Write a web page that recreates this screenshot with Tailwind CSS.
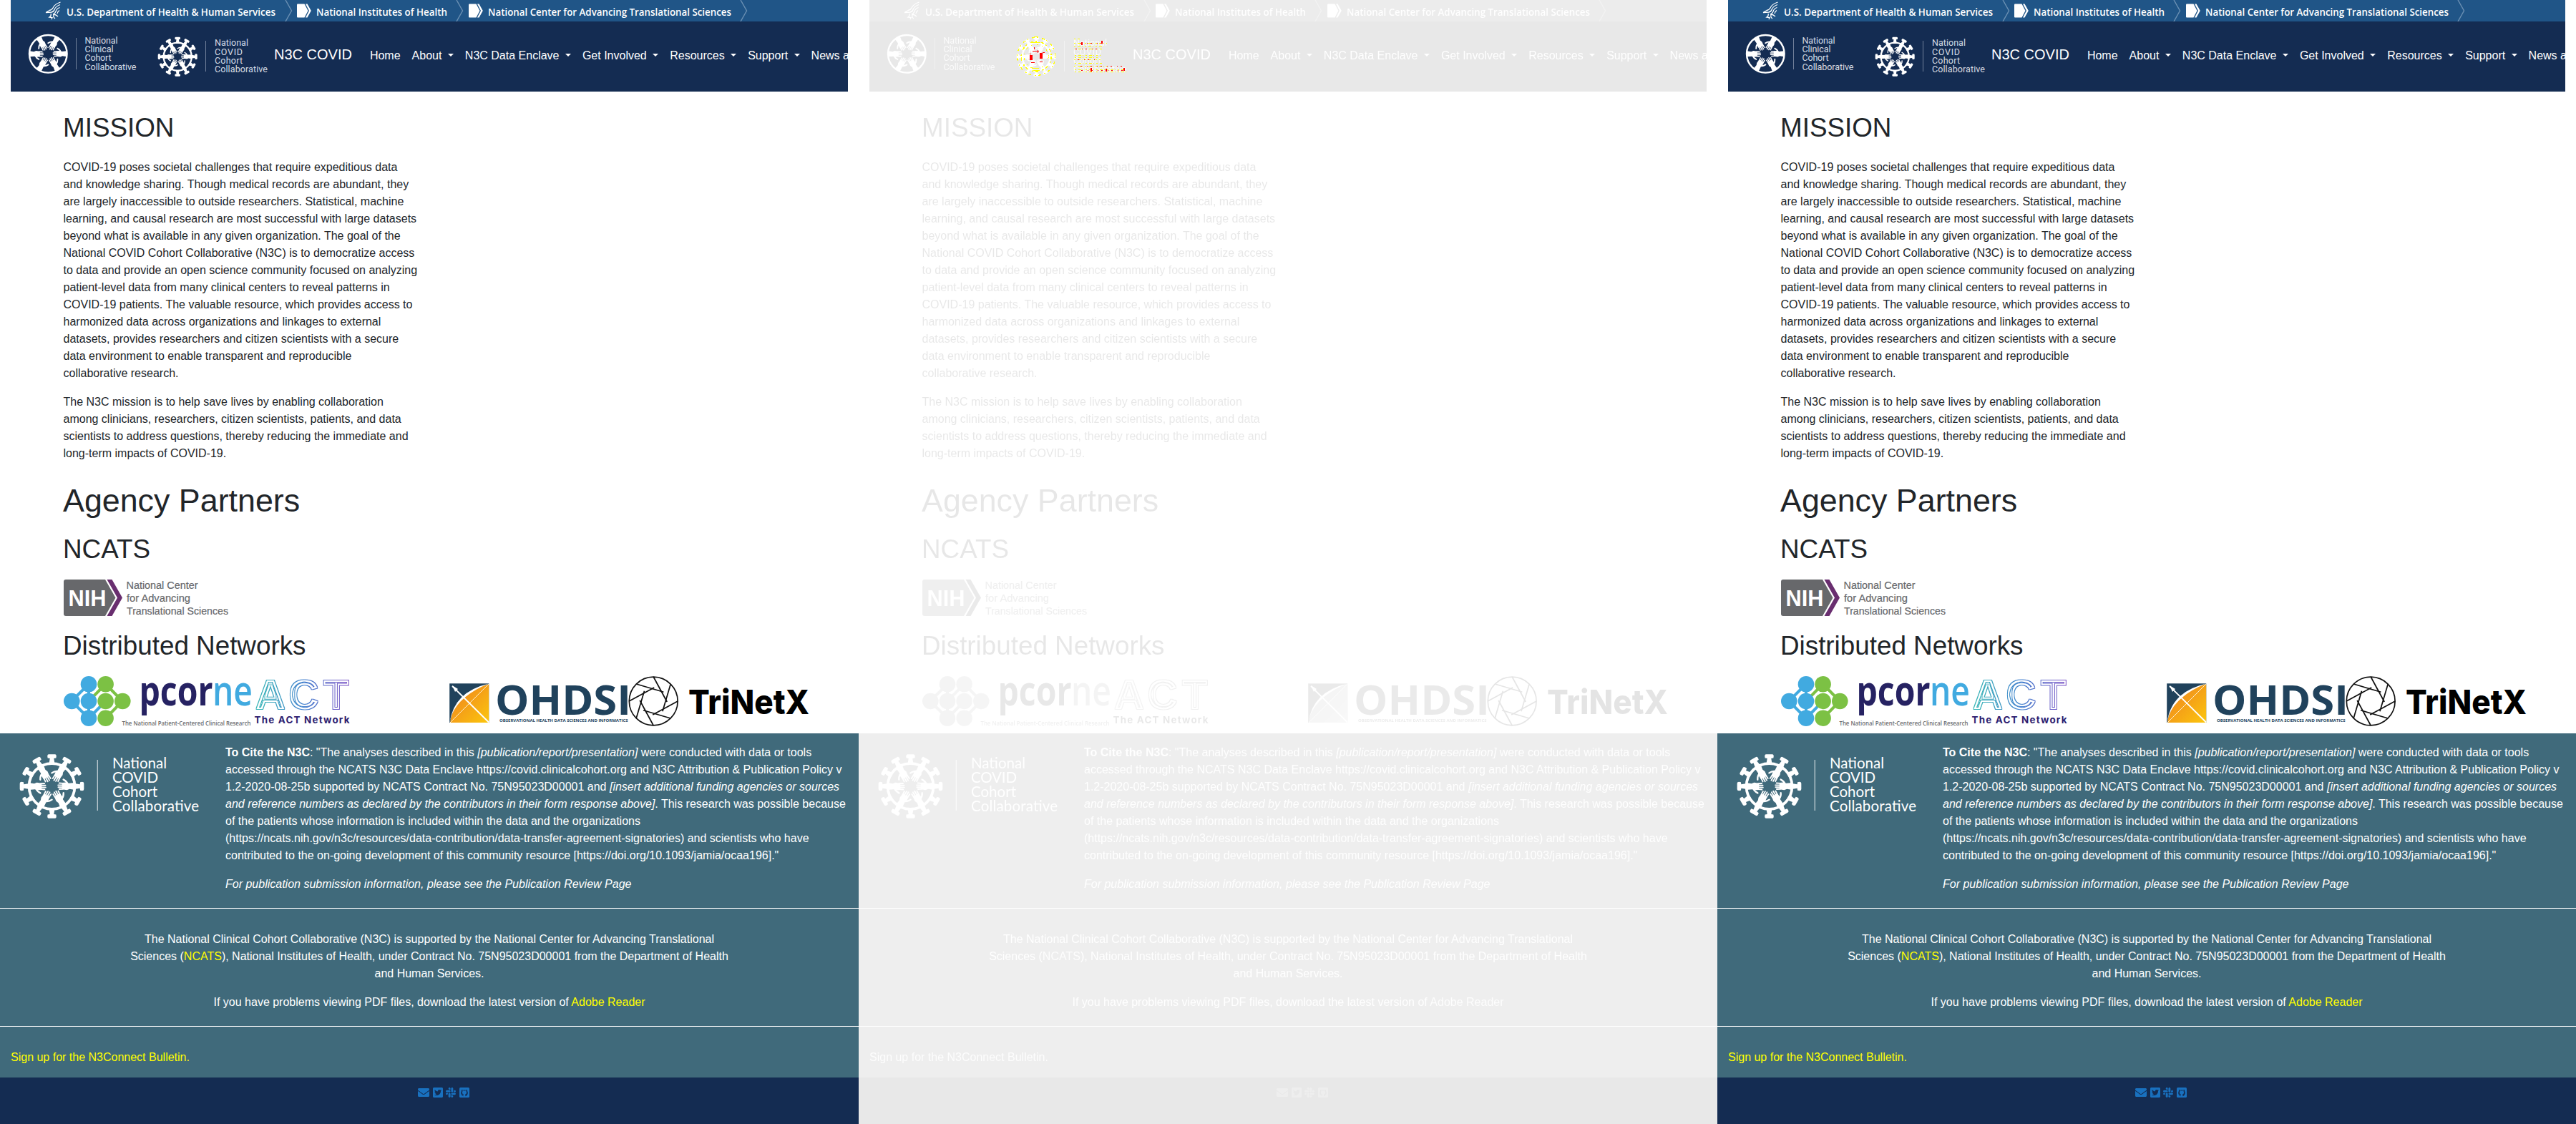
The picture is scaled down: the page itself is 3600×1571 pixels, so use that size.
<!DOCTYPE html>
<html lang="en">
<head>
<meta charset="utf-8">
<title>N3C COVID</title>
<script src="https://cdn.jsdelivr.net/npm/@tailwindcss/browser@4"></script>
</head>
<body class="bg-white overflow-hidden">
<svg width="0" height="0" class="absolute">
  <defs>
    <!-- one arm reaching from the ring to the centre -->
    <g id="hand">
      <path d="M26 -4 L19 -3.4 L16 -4.4 L11.500 -4 L11.500 3.500 L17 4.200 L20 3 L26 4Z" fill="#fff"/>
      <path d="M12.500 -3.300L8.200 -3.600M12.500 -1.200L7 -1.300M12.500 1L7.200 1M12.500 3L8.400 3.200" stroke="#fff" stroke-width="1.500" stroke-linecap="round"/>
      <path d="M18 -2.500 Q16.500 -6 13 -7.600" stroke="#fff" stroke-width="1.900" stroke-linecap="round" fill="none"/>
    </g>
    <g id="hands">
      <use href="#hand"/><use href="#hand" transform="rotate(60)"/><use href="#hand" transform="rotate(120)"/>
      <use href="#hand" transform="rotate(180)"/><use href="#hand" transform="rotate(240)"/><use href="#hand" transform="rotate(300)"/>
    </g>
    <g id="knob"><path d="M18.500 -2.600L24 -1.700L24.300 -3.600Q27.500 -4.400 27.500 -2.500L27.500 2.500Q27.500 4.400 24.300 3.600L24 1.700L18.500 2.600Z" fill="#fff"/></g>
    <g id="knobs3"><use href="#knob"/><use href="#knob" transform="rotate(30)"/><use href="#knob" transform="rotate(60)"/></g>
    <g id="virus">
      <use href="#knobs3"/><use href="#knobs3" transform="rotate(90)"/><use href="#knobs3" transform="rotate(180)"/><use href="#knobs3" transform="rotate(270)"/>
      <circle r="19.600" fill="none" stroke="#fff" stroke-width="2.300"/>
      <use href="#hands" transform="scale(.76)"/>
    </g>
    <linearGradient id="act" gradientUnits="userSpaceOnUse" x1="356" x2="489" y1="0" y2="0"><stop offset="0" stop-color="#35b8b4"/><stop offset=".5" stop-color="#4584cf"/><stop offset="1" stop-color="#7b4fc4"/></linearGradient>
    <linearGradient id="ora" x1="0" x2="1" y1="0" y2="1"><stop offset="0" stop-color="#ed7c22"/><stop offset="1" stop-color="#fcc60d"/></linearGradient>
    <!-- keeps two thin contours of a solid shape -->
    <filter id="contours" x="-5%" y="-10%" width="110%" height="120%" color-interpolation-filters="sRGB">
      <feMorphology in="SourceGraphic" operator="dilate" radius="1" result="d1"/>
      <feComposite in="d1" in2="SourceGraphic" operator="out" result="outer"/>
      <feMorphology in="SourceGraphic" operator="erode" radius="2" result="e1"/>
      <feMorphology in="SourceGraphic" operator="erode" radius="3" result="e2"/>
      <feComposite in="e1" in2="e2" operator="out" result="inner"/>
      <feMerge><feMergeNode in="outer"/><feMergeNode in="inner"/></feMerge>
    </filter>
  </defs>
</svg>

<div class="flex w-[3600px] h-[1571px] font-['Liberation_Sans',Arial,sans-serif] text-base text-[#212529]">
  <section id="before" class="w-[1200px] h-[1571px] shrink-0 overflow-hidden">
    <header class="mx-[15px] overflow-hidden">
      <div class="h-[30px] bg-[#205587] flex items-center text-white">
        <svg class="ml-[48px] w-[23px] h-[26px] shrink-0" viewBox="0 0 23 26" fill="none" stroke="#fff" stroke-width="1.300">
          <path d="M21.500 1Q13 4 11 9Q9.500 12 6 12.500L1 15.500M21 4.500Q14.500 7 13 11.500Q12 14.500 9 15L1 15.500M20.500 8.500Q16 10 15 14Q14 17 11 18M20 12.500Q17.500 14 17 17M11 18Q15 18 18 21M8 17Q9 20 6 22L10 22.500L9 25M12 19Q11 22 14 24"/>
        </svg>
        <svg class="ml-[7px] w-[293px] h-[30px] shrink-0 font-['Open_Sans',sans-serif] font-semibold text-[13.5px]" viewBox="0 0 293 30"><text x="0" y="22" textLength="292" lengthAdjust="spacingAndGlyphs" fill="#fff">U.S. Department of Health &amp; Human Services</text></svg>
        <svg class="ml-[12px] w-[11px] h-[30px] shrink-0" viewBox="0 0 11 30"><path d="M1 0L9.500 15L1 30" fill="none" stroke="#6b90b3" stroke-width="1.400"/></svg>
        <svg class="ml-[6px] w-[20px] h-[20px] shrink-0" viewBox="0 0 20 20"><path d="M0 1.500Q0 .5 1 .5H10.500L15.500 10L10.500 19.500H1Q0 19.500 0 18.500Z" fill="#fff"/><path d="M12 .5H14.500L19.800 10L14.500 19.500H12L17 10Z" fill="#fff"/></svg>
        <svg class="ml-[7px] w-[184px] h-[30px] shrink-0 font-['Open_Sans',sans-serif] font-semibold text-[13.5px]" viewBox="0 0 184 30"><text x="0" y="22" textLength="183" lengthAdjust="spacingAndGlyphs" fill="#fff">National Institutes of Health</text></svg>
        <svg class="ml-[11px] w-[11px] h-[30px] shrink-0" viewBox="0 0 11 30"><path d="M1 0L9.500 15L1 30" fill="none" stroke="#6b90b3" stroke-width="1.400"/></svg>
        <svg class="ml-[7px] w-[20px] h-[20px] shrink-0" viewBox="0 0 20 20"><path d="M0 1.500Q0 .5 1 .5H10.500L15.500 10L10.500 19.500H1Q0 19.500 0 18.500Z" fill="#fff"/><path d="M12 .5H14.500L19.800 10L14.500 19.500H12L17 10Z" fill="#fff"/></svg>
        <svg class="ml-[7px] w-[341px] h-[30px] shrink-0 font-['Open_Sans',sans-serif] font-semibold text-[13.5px]" viewBox="0 0 341 30"><text x="0" y="22" textLength="340" lengthAdjust="spacingAndGlyphs" fill="#fff">National Center for Advancing Translational Sciences</text></svg>
        <svg class="ml-[11px] w-[11px] h-[30px] shrink-0" viewBox="0 0 11 30"><path d="M1 0L9.500 15L1 30" fill="none" stroke="#6b90b3" stroke-width="1.400"/></svg>
      </div>
      <nav class="h-[98px] bg-[#142c52] flex text-white whitespace-nowrap">
        <svg class="w-[369px] h-[98px] shrink-0 font-[Roboto,sans-serif]" viewBox="15 30 369 98" fill="#fff">
          <g transform="translate(67.300 75.300)"><circle r="26.300" fill="none" stroke="#fff" stroke-width="2.400"/><use href="#hands"/></g>
          <path d="M106.500 53V97" stroke="#71809a"/>
          <g font-size="12.500" fill="#d7dce4">
            <text x="118.500" y="60.500" textLength="46">National</text><text x="118.500" y="73" textLength="40">Clinical</text><text x="118.500" y="85.300" textLength="37">Cohort</text><text x="118.500" y="97.600" textLength="72">Collaborative</text>
          </g>
          <use href="#virus" transform="translate(248.200 79.200)"/>
          <path d="M287.500 57V100" stroke="#71809a"/>
          <g font-size="12.500" fill="#d7dce4">
            <text x="300" y="64.300" textLength="47">National</text><text x="300" y="76.500" textLength="39">COVID</text><text x="300" y="88.700" textLength="39">Cohort</text><text x="300" y="101" textLength="74">Collaborative</text>
          </g>
        </svg>
        <span class="text-xl leading-[30px] mt-[31px] -ml-[1px]">N3C COVID</span>
        <ul class="flex ml-[25px] mt-[36px] gap-4 leading-6">
          <li>Home</li>
          <li>About <i class="inline-block ml-1 align-[0.255em] border-x-[4.8px] border-x-transparent border-t-[4.8px] border-t-white"></i></li>
          <li>N3C Data Enclave <i class="inline-block ml-1 align-[0.255em] border-x-[4.8px] border-x-transparent border-t-[4.8px] border-t-white"></i></li>
          <li>Get Involved <i class="inline-block ml-1 align-[0.255em] border-x-[4.8px] border-x-transparent border-t-[4.8px] border-t-white"></i></li>
          <li>Resources <i class="inline-block ml-1 align-[0.255em] border-x-[4.8px] border-x-transparent border-t-[4.8px] border-t-white"></i></li>
          <li>Support <i class="inline-block ml-1 align-[0.255em] border-x-[4.8px] border-x-transparent border-t-[4.8px] border-t-white"></i></li>
          <li>News a</li>
        </ul>
      </nav>
    </header>
    <main class="h-[897px] pl-[88px] pt-[29px] whitespace-nowrap">
      <h2 class="text-[36.8px] leading-[44px]">MISSION</h2>
      <p class="mt-[21px] pl-[0.5px] leading-6">COVID-19 poses societal challenges that require expeditious data<br>and knowledge sharing. Though medical records are abundant, they<br>are largely inaccessible to outside researchers. Statistical, machine<br>learning, and causal research are most successful with large datasets<br>beyond what is available in any given organization. The goal of the<br>National COVID Cohort Collaborative (N3C) is to democratize access<br>to data and provide an open science community focused on analyzing<br>patient-level data from many clinical centers to reveal patterns in<br>COVID-19 patients. The valuable resource, which provides access to<br>harmonized data across organizations and linkages to external<br>datasets, provides researchers and citizen scientists with a secure<br>data environment to enable transparent and reproducible<br>collaborative research.</p>
      <p class="mt-4 pl-[0.5px] leading-6">The N3C mission is to help save lives by enabling collaboration<br>among clinicians, researchers, citizen scientists, patients, and data<br>scientists to address questions, thereby reducing the immediate and<br>long-term impacts of COVID-19.</p>
      <h1 class="mt-[26px] text-[44.8px] leading-[54px]">Agency Partners</h1>
      <h2 class="mt-5 text-[36.8px] leading-[44px]">NCATS</h2>
      <svg class="mt-5 block w-[240px] h-[51px]" viewBox="88 810 240 51">
        <path d="M92 810H147L161.500 835.500L147 861H92Q89 861 89 858V813Q89 810 92 810Z" fill="#67686b"/>
        <path d="M149.500 810H156.500L171 835.500L156.500 861H149.500L164 835.500Z" fill="#692e6f"/>
        <text x="95.500" y="847" font-family="Liberation Sans" font-weight="700" font-size="30.500" textLength="53" lengthAdjust="spacingAndGlyphs" fill="#fff">NIH</text>
        <g font-family="Liberation Sans" font-size="14" fill="#68696c" stroke="#68696c" stroke-width=".2"><text x="176.500" y="823" textLength="100" lengthAdjust="spacingAndGlyphs">National Center</text><text x="177" y="841" textLength="89" lengthAdjust="spacingAndGlyphs">for Advancing</text><text x="177" y="858.500" textLength="142" lengthAdjust="spacingAndGlyphs">Translational Sciences</text></g>
      </svg>
      <h2 class="mt-5 text-[36.8px] leading-[44px]">Distributed Networks</h2>
      <div class="mt-5 flex">
        <svg class="block w-[265px] h-[71px]" viewBox="88 945 265 71">
          <path d="M124 956L100 980L124 1004M124 956V1004L147.600 980" stroke="#41aae0" stroke-width="4" fill="none"/>
          <path d="M147.600 956L171 980L147.600 1004M124 980L147.600 956" stroke="#7cc144" stroke-width="4" fill="none"/>
          <g fill="#41aae0"><circle cx="124" cy="956.300" r="11.300"/><circle cx="100.300" cy="980" r="11.300"/><circle cx="124" cy="980" r="11.300"/><circle cx="124" cy="1003.700" r="11.300"/></g>
          <g fill="#7cc144"><circle cx="147.600" cy="956.300" r="11.300"/><circle cx="147.600" cy="980" r="11.300"/><circle cx="171.300" cy="980" r="11.300"/><circle cx="147.600" cy="1003.700" r="11.300"/></g>
          <g font-family="Open Sans" font-size="58"><text x="194.500" y="985.500" font-weight="700" textLength="103" lengthAdjust="spacingAndGlyphs" fill="#262262">pcor</text><text x="297" y="985.500" font-weight="600" textLength="56" lengthAdjust="spacingAndGlyphs" fill="#41aae0">ne</text></g>
          <text x="170.500" y="1013.500" font-family="Open Sans" font-weight="600" font-size="8.500" textLength="180" lengthAdjust="spacingAndGlyphs" fill="#6a6b6e">The National Patient-Centered Clinical Research</text>
        </svg>
        <svg class="block w-[187px] h-[71px]" viewBox="353 945 187 71">
          <text x="357 403.500 452" y="990.500" font-family="Liberation Sans" font-weight="700" font-size="58" fill="url(#act)" filter="url(#contours)">ACT</text>
          <text x="355.500" y="1011.300" font-family="Inter" font-weight="700" font-size="13.400" textLength="133" fill="#2d1e70">The ACT Network</text>
        </svg>
        <svg class="block ml-[88px] w-[250px] h-[71px]" viewBox="628 945 250 71">
          <rect x="628.200" y="955.300" width="55" height="54.700" fill="#20425c"/>
          <path d="M629 1010Q635 968 683.200 956V1010Z" fill="url(#ora)"/>
          <path d="M628.500 1010Q634 967 683 955.500Q642 972 631 1000Z" fill="#fff"/>
          <path d="M632 959L683 1009.500" stroke="#fff" stroke-width="1.800"/><path d="M629 1010L683 956" stroke="#fff" stroke-width=".8"/><path d="M632 958L640 963L636 967Z" fill="#fff"/>
          <text x="692" y="998.500" font-family="Open Sans" font-weight="700" font-size="58" textLength="190" lengthAdjust="spacingAndGlyphs" fill="#20425c">OHDSI</text>
          <text x="698" y="1008.700" font-family="Open Sans" font-weight="700" fill="#20425c" font-size="5.800" textLength="179.500" lengthAdjust="spacingAndGlyphs">OBSERVATIONAL HEALTH DATA SCIENCES AND INFORMATICS</text>
        </svg>
        <svg class="block w-[260px] h-[71px]" viewBox="878 945 260 71">
          <g transform="translate(913.200 980)" fill="none" stroke="#111" stroke-width="1.700"><circle r="33.900"/>
            <path d="M0 -34L19 1"/><path d="M0 -34L19 1" transform="rotate(45)"/><path d="M0 -34L19 1" transform="rotate(90)"/><path d="M0 -34L19 1" transform="rotate(135)"/><path d="M0 -34L19 1" transform="rotate(180)"/><path d="M0 -34L19 1" transform="rotate(225)"/><path d="M0 -34L19 1" transform="rotate(270)"/><path d="M0 -34L19 1" transform="rotate(315)"/></g>
          <text x="962" y="997.500" font-family="Inter" font-weight="800" font-size="47" textLength="169" lengthAdjust="spacingAndGlyphs" fill="#000">TriNetX</text>
        </svg>
      </div>
    </main>
    <footer class="text-white whitespace-nowrap leading-6">
      <div class="bg-[#406a7b] h-[481px]">
        <div class="h-[244px] pt-[15px] flex">
          <svg class="-mt-[15px] w-[315px] h-[140px] shrink-0" viewBox="0 1025 315 140">
            <use href="#virus" transform="translate(72.500 1099) scale(1.630)"/>
            <path d="M136.300 1062V1133" stroke="#c2cfd5" stroke-width="1.300"/>
            <g font-family="Lato" font-size="20.500" fill="#fff"><text x="157" y="1073.700" textLength="76">National</text><text x="157" y="1093.700" textLength="64">COVID</text><text x="157" y="1113.800" textLength="63">Cohort</text><text x="157" y="1133.800" textLength="121">Collaborative</text></g>
          </svg>
          <div>
            <p><b>To Cite the N3C</b>: "The analyses described in this <em>[publication/report/presentation]</em> were conducted with data or tools<br>accessed through the NCATS N3C Data Enclave https://covid.clinicalcohort.org and N3C Attribution &amp; Publication Policy v<br>1.2-2020-08-25b supported by NCATS Contract No. 75N95023D00001 and <em>[insert additional funding agencies or sources<br>and reference numbers as declared by the contributors in their form response above]</em>. This research was possible because<br>of the patients whose information is included within the data and the organizations<br>(https://ncats.nih.gov/n3c/resources/data-contribution/data-transfer-agreement-signatories) and scientists who have<br>contributed to the on-going development of this community resource [https://doi.org/10.1093/jamia/ocaa196]."</p>
            <p class="mt-4 italic">For publication submission information, please see the Publication Review Page</p>
          </div>
        </div>
        <div class="border-t border-white h-[165px] pt-[31px] text-center">
          <p>The National Clinical Cohort Collaborative (N3C) is supported by the National Center for Advancing Translational<br>Sciences (<a class="text-[#ffff00]">NCATS</a>), National Institutes of Health, under Contract No. 75N95023D00001 from the Department of Health<br>and Human Services.</p>
          <p class="mt-4">If you have problems viewing PDF files, download the latest version of <a class="text-[#ffff00]">Adobe Reader</a></p>
        </div>
        <div class="border-t border-white pt-[31px] pl-[15px]"><a class="text-[#ffff00]">Sign up for the N3Connect Bulletin.</a></div>
      </div>
      <div class="h-[65px] bg-[#142c52] pt-[13px] pl-[584px] flex gap-[4.500px]">
        <svg class="size-4" viewBox="0 0 512 512" fill="#1971bf"><path d="M502.3 190.8c3.9-3.1 9.7-.2 9.7 4.7V400c0 26.500-21.500 48-48 48H48c-26.500 0-48-21.500-48-48V195.600c0-5 5.700-7.800 9.700-4.700 22.400 17.400 52.100 39.500 154.100 113.600 21.100 15.400 56.700 47.800 92.200 47.600 35.700.3 72-32.800 92.300-47.600 102-74.100 131.600-96.300 154-113.700zM256 320c23.200.4 56.600-29.200 73.400-41.400 132.700-96.300 142.800-104.700 173.400-128.700 5.800-4.500 9.200-11.500 9.200-18.900v-19c0-26.500-21.500-48-48-48H48c-26.500 0-48 21.500-48 48v19c0 7.400 3.400 14.300 9.200 18.900 30.600 23.900 40.700 32.400 173.400 128.700 16.800 12.200 50.200 41.800 73.400 41.400z"/></svg>
        <svg class="w-3.5 h-4" viewBox="0 0 448 512" fill="#1971bf"><path d="M400 32H48C21.500 32 0 53.500 0 80v352c0 26.500 21.500 48 48 48h352c26.500 0 48-21.500 48-48V80c0-26.500-21.500-48-48-48zm-48.900 158.800c.2 2.800.2 5.700.2 8.500 0 86.700-66 186.600-186.600 186.600-37.200 0-71.700-10.800-100.700-29.400 5.300.6 10.400.8 15.800.8 30.700 0 58.900-10.400 81.400-28-28.800-.6-53-19.500-61.300-45.500 10.100 1.500 19.200 1.500 29.600-1.200-30-6.100-52.500-32.500-52.500-64.400v-.8c8.700 4.900 18.900 7.900 29.600 8.300a65.447 65.447 0 0 1-29.200-54.600c0-12.200 3.200-23.400 8.900-33.100 32.300 39.800 80.800 65.800 135.200 68.600-9.300-44.500 24-80.600 64-80.600 18.900 0 35.900 7.900 47.900 20.700 14.800-2.800 29-8.300 41.600-15.800-4.900 15.200-15.200 28-28.800 36.100 13.200-1.400 26-5.100 37.800-10.200-8.900 13.100-20.100 24.700-32.900 34z"/></svg>
        <svg class="w-3.5 h-4" viewBox="0 0 448 512" fill="#1971bf"><path d="M94.120 315.100c0 25.900-21.160 47.060-47.060 47.060S0 341 0 315.100c0-25.900 21.160-47.060 47.060-47.060h47.060v47.060zm23.720 0c0-25.900 21.160-47.060 47.060-47.060s47.060 21.160 47.060 47.060v117.840c0 25.900-21.160 47.060-47.060 47.060s-47.060-21.160-47.060-47.060V315.100zm47.060-188.980c-25.900 0-47.060-21.160-47.060-47.060S139 32 164.900 32s47.060 21.160 47.060 47.060v47.060H164.900zm0 23.720c25.900 0 47.060 21.160 47.060 47.060s-21.160 47.060-47.060 47.060H47.060C21.160 243.960 0 222.800 0 196.900s21.160-47.060 47.060-47.060H164.900zm188.980 47.060c0-25.900 21.160-47.060 47.060-47.060 25.900 0 47.060 21.160 47.060 47.060s-21.160 47.060-47.060 47.060h-47.060V196.900zm-23.720 0c0 25.900-21.160 47.060-47.060 47.060-25.900 0-47.060-21.160-47.060-47.060V79.060c0-25.900 21.160-47.060 47.060-47.060 25.900 0 47.060 21.160 47.060 47.060V196.900zM283.100 385.880c25.900 0 47.060 21.160 47.060 47.060 0 25.900-21.160 47.060-47.060 47.060-25.900 0-47.060-21.160-47.060-47.060v-47.060h47.060zm0-23.720c-25.900 0-47.060-21.160-47.060-47.060 0-25.900 21.160-47.060 47.060-47.060h117.840c25.900 0 47.060 21.160 47.060 47.060 0 25.900-21.160 47.060-47.060 47.060H283.100z"/></svg>
        <svg class="w-3.5 h-4" viewBox="0 0 448 512"><rect y="32" width="448" height="448" rx="48" fill="#1971bf"/><path d="M180 424C60 390 50 240 95 190Q88 160 102 128Q130 132 158 152Q224 136 290 152Q318 132 346 128Q360 160 353 190C398 240 388 390 268 424Q276 350 256 340Q330 325 322 240Q322 215 304 196Q310 178 302 162Q284 164 264 178Q224 168 184 178Q164 164 146 162Q138 178 144 196Q126 215 126 240Q118 325 192 340Q180 350 178 370Q145 380 128 345Q120 335 110 340Q140 390 178 398Z" fill="#142c52"/></svg>
      </div>
    </footer>
  </section>

  <section class="relative w-[1200px] h-[1571px] shrink-0 overflow-hidden">
    <div id="diff" class="grayscale opacity-10"></div>
    <!-- changed pixels -->
    <svg class="absolute left-[215px] top-[48px]" width="165" height="66" viewBox="215 48 165 66" fill="none" shape-rendering="crispEdges">
      <g stroke="#ff0">
        <circle cx="248.200" cy="79" r="21" stroke-dasharray="4 3 2 6" stroke-width="1.500"/>
        <circle cx="248.200" cy="79" r="17" stroke-dasharray="3 5 1 7"/>
        <circle cx="248.200" cy="79" r="26.500" stroke-dasharray="2 5 4 2.900" stroke-width="1.300"/>
        <path d="M245 51.500H251M243 59.500H254M244 98.500H253M243 95.500H252"/>
        <path stroke-dasharray="2 3 4 2 1 3" d="M301 54.500H309M301 60.500H347M301 64.500H340M302 68.500H340M302 77.500H338M302 80.500H336M301 83.500H338M302 88.500H340M301 92.500H348M302 97.500H371M302 100.500H374"/>
      </g>
      <g stroke="#f00">
        <path stroke-width="4" d="M241 77V84M255 74V82"/>
        <path d="M243 71.500H252M245.500 66V69M239 75.500H241M257 73.500H260M250.500 70V74M241 87.500H246M253 86.500H257"/>
        <path stroke-dasharray="2 7 1 4" d="M310 60.500H345M303 68.500H338M306 83.500H332M310 92.500H372M311 98.500H374"/>
        <path stroke-width="2" d="M340 57V61M312 59V63M325 95V100M346 96V100M371 95V99"/>
      </g>
    </svg>
  </section>

  <section id="after" class="w-[1200px] h-[1571px] shrink-0 overflow-hidden"></section>
</div>
<script>
  var page = document.getElementById('before').innerHTML;
  document.getElementById('diff').innerHTML = page;
  document.getElementById('after').innerHTML = page;
</script>
</body>
</html>
